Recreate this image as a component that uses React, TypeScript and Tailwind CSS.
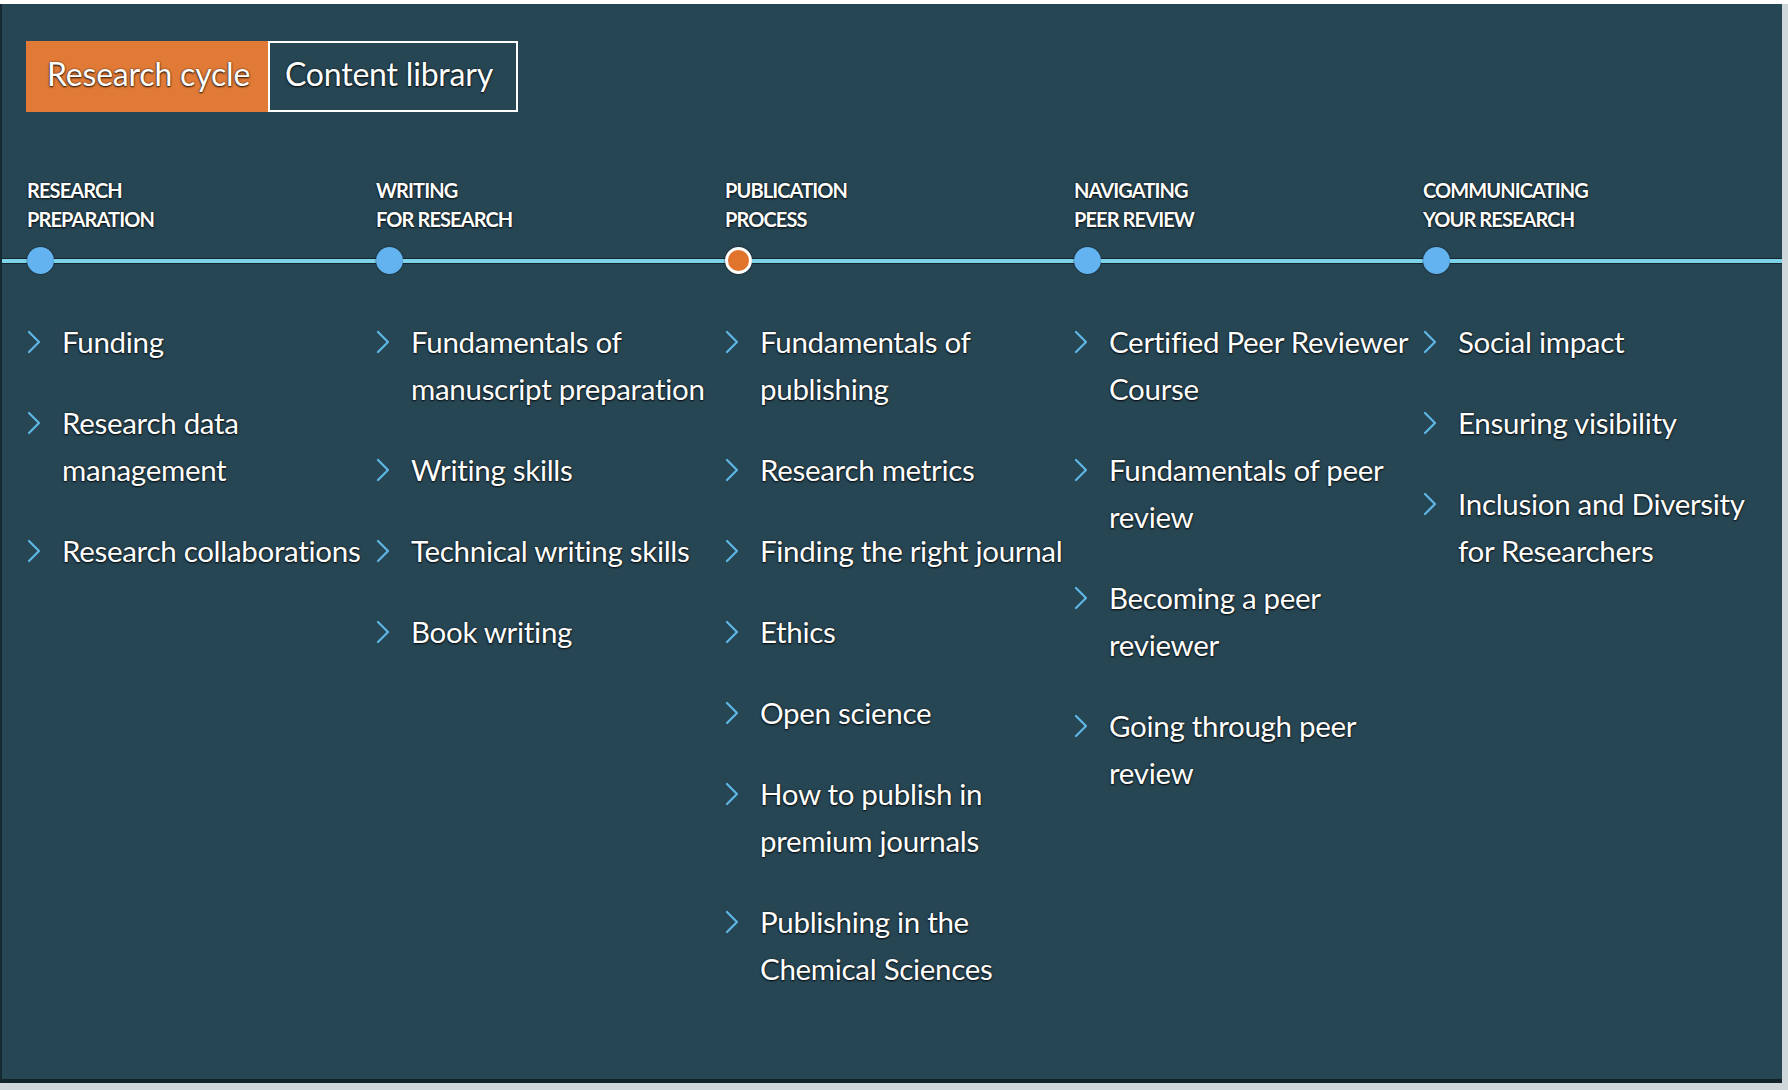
import React from "react"

type Stage = {
  title: [string, string]
  active?: boolean
  items: string[][]
}

const stages: Stage[] = [
  {
    title: ["Research", "Preparation"],
    items: [["Funding"], ["Research data", "management"], ["Research collaborations"]],
  },
  {
    title: ["Writing", "for Research"],
    items: [
      ["Fundamentals of", "manuscript preparation"],
      ["Writing skills"],
      ["Technical writing skills"],
      ["Book writing"],
    ],
  },
  {
    title: ["Publication", "Process"],
    active: true,
    items: [
      ["Fundamentals of", "publishing"],
      ["Research metrics"],
      ["Finding the right journal"],
      ["Ethics"],
      ["Open science"],
      ["How to publish in", "premium journals"],
      ["Publishing in the", "Chemical Sciences"],
    ],
  },
  {
    title: ["Navigating", "Peer Review"],
    items: [
      ["Certified Peer Reviewer", "Course"],
      ["Fundamentals of peer", "review"],
      ["Becoming a peer", "reviewer"],
      ["Going through peer", "review"],
    ],
  },
  {
    title: ["Communicating", "Your Research"],
    items: [["Social impact"], ["Ensuring visibility"], ["Inclusion and Diversity", "for Researchers"]],
  },
]

const cols = "grid grid-cols-[349px_349px_349px_349px_1fr]"
const shadow = "[text-shadow:0_1px_2px_rgba(0,0,0,0.85),0_0_2px_rgba(0,0,0,0.6)]"

function Chevron() {
  return (
    <svg width="14" height="24" viewBox="0 0 14 24" fill="none">
      <path d="M2 2L12 12L2 22" stroke="#5fb7e6" strokeWidth="2.2" strokeLinecap="round" strokeLinejoin="round" />
    </svg>
  )
}

export default function App() {
  return (
    <main className="min-h-screen w-[1788px] h-[1090px] overflow-hidden bg-[#cfd7db] font-['Lato',sans-serif]">
      <div className="h-[4px] w-full bg-white" />
      <div className="flex">
        <section className="w-[1782px] h-[1079px] bg-[#274654] border-l-2 border-[#152a33] border-b-4 border-b-[#12232a] text-white">
          {/* tabs */}
          <div className="ml-[24px] mt-[37px] flex h-[71px]">
            <button className={`w-[242px] bg-[#e07a36] pb-[6px] pl-[21px] text-left text-[32px] tracking-[-0.2px] ${shadow}`}>
              Research cycle
            </button>
            <button className={`w-[250px] border-2 border-white pb-[6px] pl-[15px] text-left text-[32px] tracking-[-0.2px] ${shadow}`}>
              Content library
            </button>
          </div>

          {/* stage headings */}
          <div className={`${cols} mt-[64px] pl-[25px]`}>
            {stages.map((s) => (
              <h2
                key={s.title[0]}
                className={`text-[20px] font-bold uppercase leading-[29px] tracking-[-0.9px] ${shadow}`}
              >
                {s.title[0]}
                <br />
                {s.title[1]}
              </h2>
            ))}
          </div>

          {/* timeline */}
          <div className="mt-[13px] flex items-center h-[27px]">
            <div className="h-[6px] w-[25px] border-y border-[#14262e] bg-[#7dd3ea]" />
            <div className={`${cols} flex-1 items-center`}>
              {stages.map((s) => (
                <div key={s.title[0]} className="flex items-center">
                  {s.active ? (
                    <span className="h-[27px] w-[27px] shrink-0 rounded-full border-[3px] border-white bg-[#e0742c] shadow-[0_0_2px_rgba(0,0,0,0.9)]" />
                  ) : (
                    <span className="h-[27px] w-[27px] shrink-0 rounded-full bg-[#62b3ef] shadow-[0_0_2px_rgba(0,0,0,0.7)]" />
                  )}
                  <div className="h-[6px] flex-1 border-y border-[#14262e] bg-[#7dd3ea]" />
                </div>
              ))}
            </div>
          </div>

          {/* topic lists */}
          <div className={`${cols} mt-[44px] pl-[25px]`}>
            {stages.map((s) => (
              <ul key={s.title[0]} className="flex flex-col gap-[34px]">
                {s.items.map((lines) => (
                  <li key={lines.join(" ")} className="flex">
                    <span className="flex h-[47px] w-[35px] shrink-0 items-center">
                      <Chevron />
                    </span>
                    <span className={`whitespace-nowrap text-[29.5px] leading-[47px] tracking-[-0.3px] ${shadow}`}>
                      {lines.map((l, i) => (
                        <React.Fragment key={l}>
                          {i > 0 && <br />}
                          {l}
                        </React.Fragment>
                      ))}
                    </span>
                  </li>
                ))}
              </ul>
            ))}
          </div>
        </section>
      </div>
    </main>
  )
}
